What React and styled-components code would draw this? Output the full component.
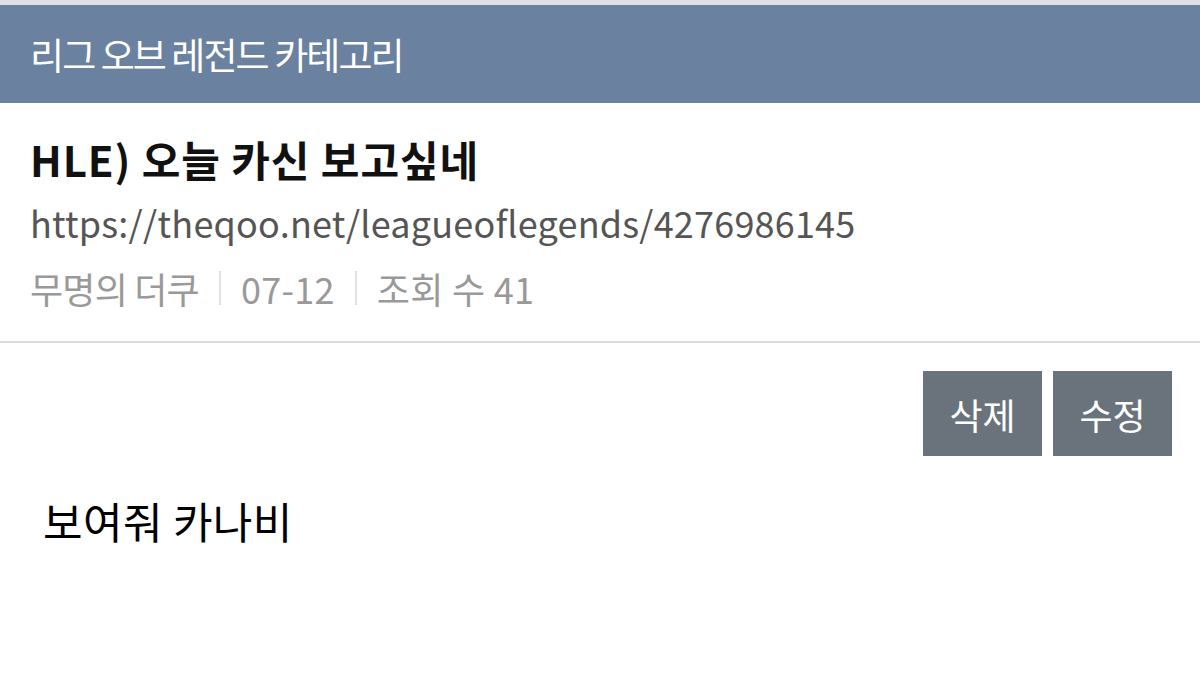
import styled, { createGlobalStyle } from 'styled-components'

const GlobalStyle = createGlobalStyle`
  html, body {
    margin: 0;
    padding: 0;
    background: #fff;
    font-family: "Noto Sans CJK KR", "Noto Sans", sans-serif;
  }
`

const Page = styled.div`
  width: 1200px;
  height: 690px;
  overflow: hidden;
  border-top: 5px solid #e1e0e4;
  box-sizing: border-box;
`

const CategoryBar = styled.div`
  height: 98px;
  background: #6a819f;
  color: #fff;
  display: flex;
  align-items: center;
  padding: 0 30px;
  font-size: 37px;
  letter-spacing: -1.9px;
`

const PostHead = styled.div`
  padding: 30px 30px 0;
  height: 240px;
  box-sizing: border-box;
  border-bottom: 2px solid #dcdcdc;
`

const Title = styled.h1`
  margin: 0;
  font-size: 42px;
  font-weight: 700;
  line-height: 52px;
  color: #111;
  letter-spacing: 0.9px;
`

const Url = styled.div`
  margin-top: 15px;
  font-size: 36px;
  line-height: 44px;
  color: #555;
  letter-spacing: 0.2px;
`

const Meta = styled.div`
  margin-top: 22px;
  display: flex;
  align-items: center;
  font-size: 36px;
  line-height: 44px;
  color: #999;
`

const MetaItem = styled.span`
  letter-spacing: ${props => props.tight ? '-0.8px' : '0.3px'};
`

const Divider = styled.span`
  width: 2px;
  height: 34px;
  background: #e2e2e2;
  margin: 0 20px;
`

const Actions = styled.div`
  display: flex;
  justify-content: flex-end;
  gap: 11px;
  padding: 28px 28px 0;
`

const ActionButton = styled.button`
  width: 119px;
  height: 85px;
  border: none;
  background: #6a737c;
  color: #fff;
  font-family: inherit;
  font-size: 36px;
  padding: 0;
`

const Body = styled.p`
  margin: 36px 0 0 43px;
  font-size: 43px;
  line-height: 56px;
  color: #000;
  letter-spacing: 0.4px;
`

export default function App() {
  return (
    <>
      <GlobalStyle />
      <Page>
        <CategoryBar>리그 오브 레전드 카테고리</CategoryBar>
        <PostHead>
          <Title>HLE) 오늘 카신 보고싶네</Title>
          <Url>https://theqoo.net/leagueoflegends/4276986145</Url>
          <Meta>
            <MetaItem tight>무명의 더쿠</MetaItem>
            <Divider />
            <MetaItem>07-12</MetaItem>
            <Divider />
            <MetaItem>조회 수 41</MetaItem>
          </Meta>
        </PostHead>
        <Actions>
          <ActionButton>삭제</ActionButton>
          <ActionButton>수정</ActionButton>
        </Actions>
        <Body>보여줘 카나비</Body>
      </Page>
    </>
  )
}
